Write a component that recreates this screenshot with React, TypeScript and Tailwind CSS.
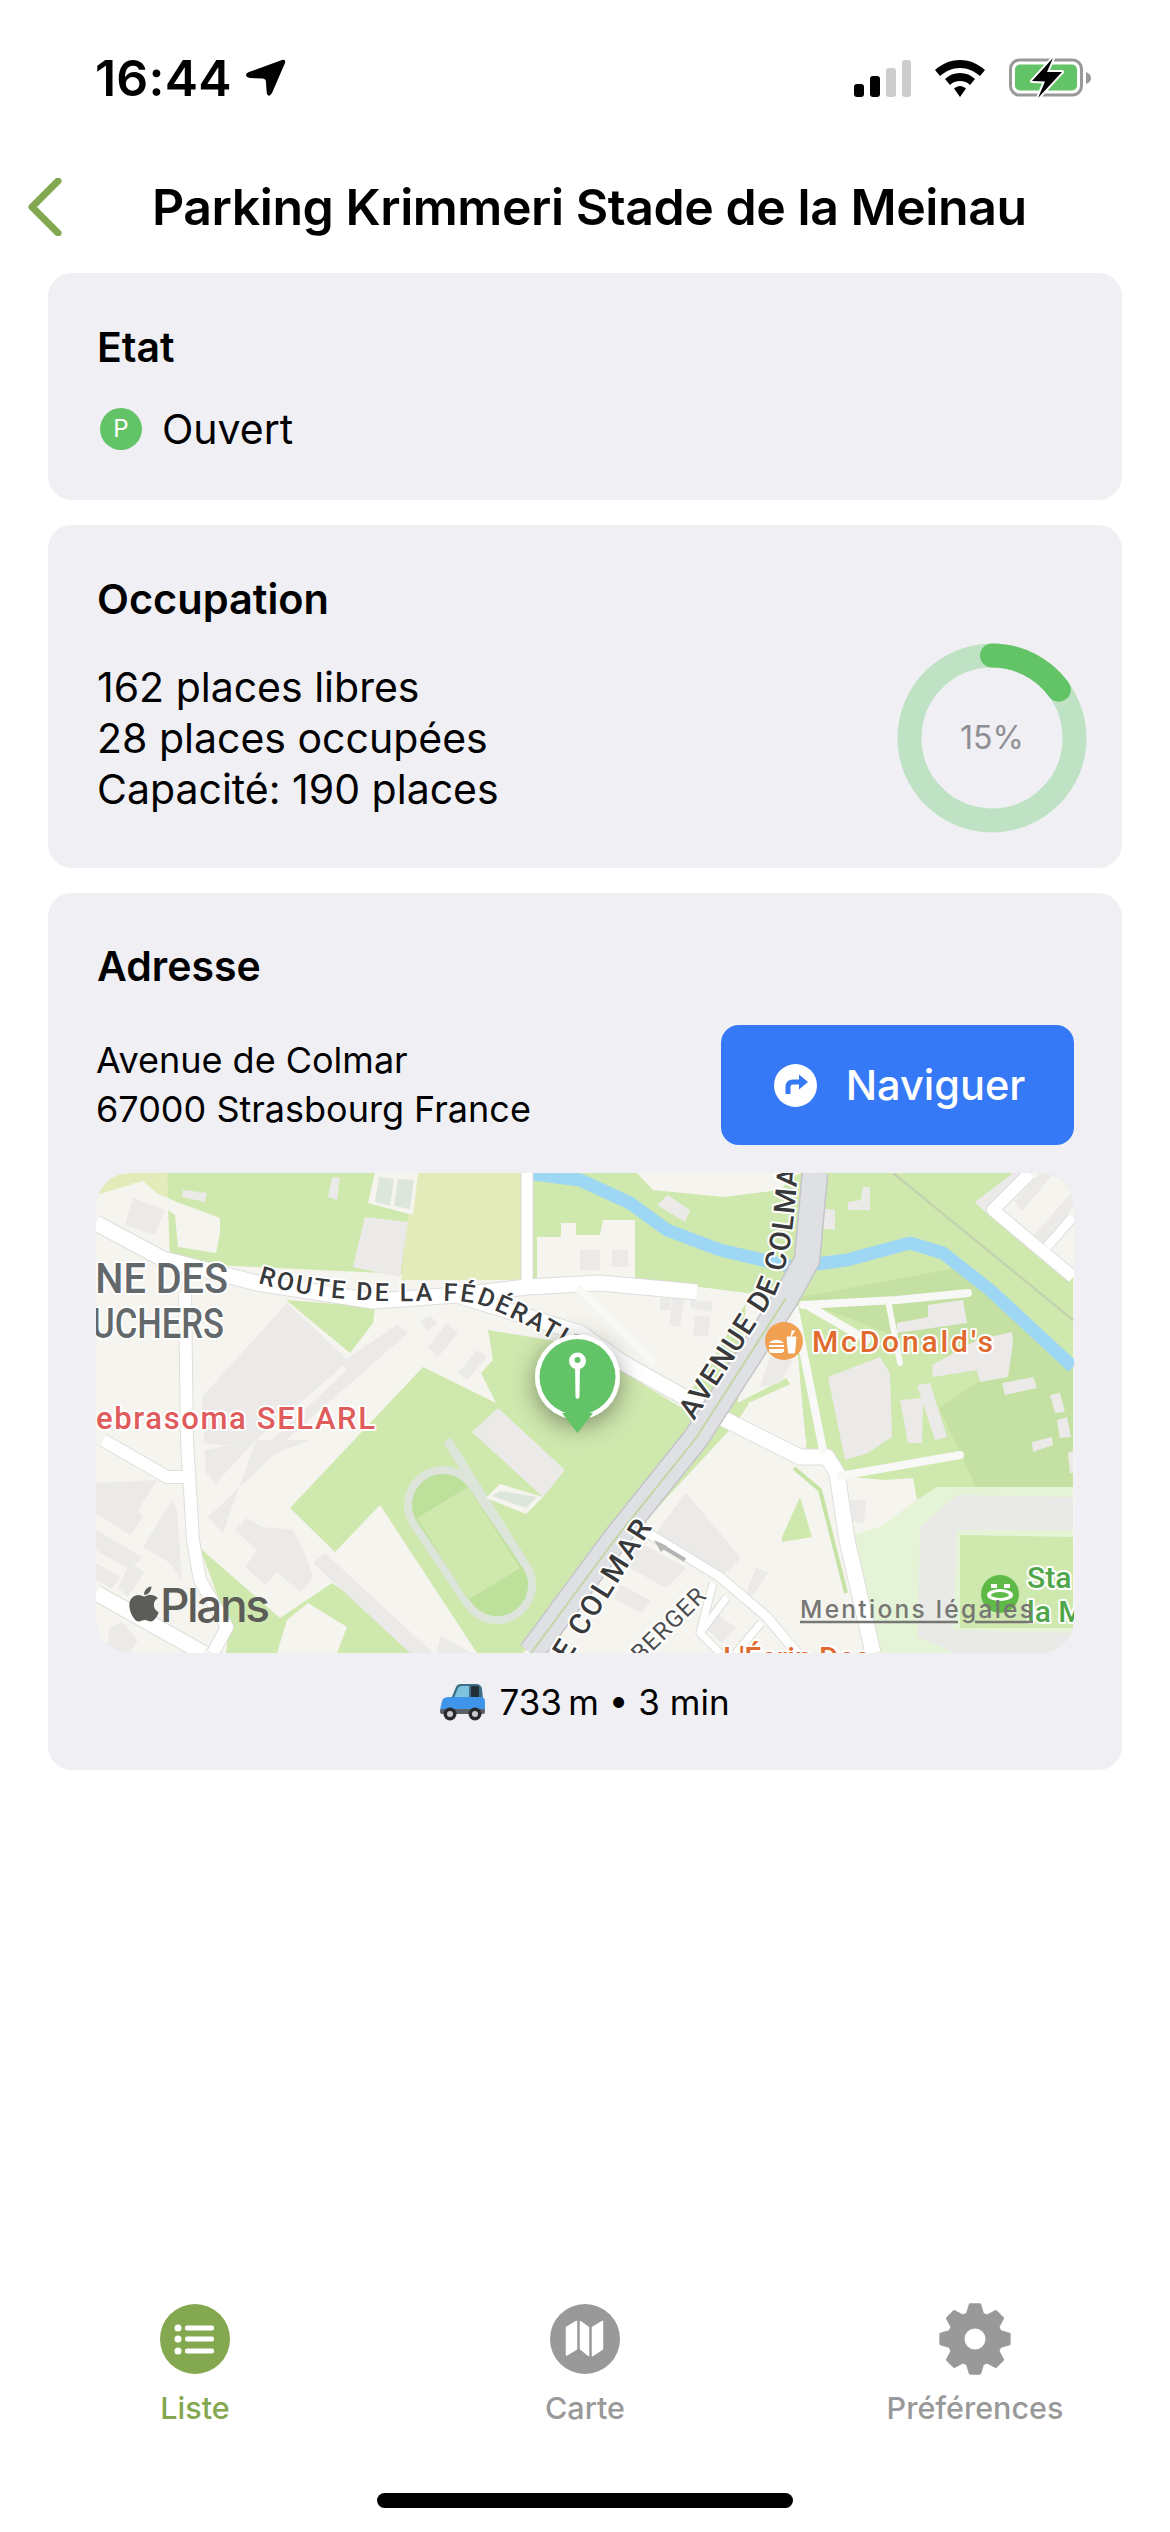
import type { ReactNode } from "react";
import { FaApple } from "react-icons/fa";

const LAND = "#f6f4ee";
const GREEN = "#cfe8ae";
const BUILDING = "#ebeae8";
const SANS = "font-['Inter',sans-serif]";

// polygons in map coordinates (978 x 480)
const greens = [
  "71,0 436,0 436,107 74,90",
  "190,127 279,134 277,150 254,180",
  "327,194 400,230 385,200 397,187 392,157 484,172 584,234 620,180 650,130 640,250 427,480 381,480 284,332 239,379 194,335",
  "104,375 184,445 236,410 337,480 130,480 133,454",
  "436,0 715,0 690,125 604,114 436,107",
  "719,0 977,0 977,314 841,314 821,327 817,305 789,307 744,303 735,284 711,284 697,127 711,100",
  "622,240 690,205 697,215 652,232 640,250",
  "704,324 716,364 686,369 686,364",
];

const lands = [
  "541,0 557,17 627,24 684,17 701,0",
  "441,64 465,64 465,50 480,50 480,62 504,62 507,47 539,47 539,110 441,110",
  "34,9 81,29 124,45 124,60 120,80 82,74 79,42 48,20",
  "279,0 322,0 317,42 272,30",
  "652,230 697,210 711,270 657,260",
  "500,125 617,127 630,150 591,194 561,180",
  "191,447 212,430 251,454 241,480 181,480",
  "917,0 977,0 977,104 897,37",
];

const buildings = [
  "37,25 69,37 59,62 29,52",
  "87,17 111,20 109,29 86,24",
  "236,4 244,5 241,27 232,24",
  "269,44 312,49 304,104 257,94",
  "106,224 191,130 252,187 240,199 152,274 108,270",
  "301,152 312,160 184,272 176,267 251,197 244,190",
  "324,148 334,143 342,150 332,157",
  "351,150 362,160 342,184 332,174",
  "381,177 391,184 371,207 362,200",
  "112,344 180,280 214,267 160,267 127,360",
  "109,277 160,267 120,310 110,300",
  "139,357 151,345 166,354 197,357 209,380 217,405 204,419 181,399 169,412 149,394 161,377",
  "217,390 229,380 337,480 314,480",
  "0,310 61,307 42,337 47,344 34,362 0,340",
  "47,374 76,327 81,337 86,407 74,390",
  "0,357 46,384 34,397 0,377",
  "0,390 24,404 16,416 0,406",
  "34,390 49,399 31,424 22,414",
  "14,454 26,449 42,467 34,480 10,480",
  "376,259 402,235 469,297 447,324",
  "345,463 376,480 340,480",
  "561,32 572,22 594,37 589,49",
  "752,37 774,37 774,14 767,14 765,27 752,29",
  "722,35 739,37 739,57 722,55",
  "484,77 504,77 504,97 484,97",
  "516,77 532,77 532,94 516,94",
  "564,125 575,125 574,137 564,138",
  "576,125 589,124 584,154 574,152",
  "594,127 617,129 615,139 594,135",
  "599,142 614,144 612,164 597,162",
  "664,214 674,184 697,187 684,210",
  "732,204 784,184 794,200 796,264 772,280 749,287",
  "804,227 827,225 826,270 812,270",
  "821,212 834,210 851,264 839,267",
  "832,132 867,127 871,150 801,160 801,150 832,144",
  "881,167 916,159 917,170 912,204 884,209 881,197 837,204 836,192",
  "906,210 937,204 941,215 909,222",
  "954,222 964,220 969,239 959,240",
  "961,247 971,244 975,264 964,265",
  "936,269 956,264 957,272 937,279",
  "972,280 977,278 977,300 974,300",
  "879,29 917,0 930,0 890,40",
  "918,28 944,0 958,0 926,38",
  "938,62 977,18 977,34 950,72",
  "545,370 590,395 570,415 525,390",
  "525,412 555,428 545,440 518,425",
  "620,440 640,455 625,470 610,455",
  "660,395 672,400 655,425 650,420",
  "590,320 645,385 625,405 560,360",
  "750,328 770,326 768,350 755,348",
];

const whiteRoads = [
  { d: "M0 50 L67 86 L161 110 L277 128 L361 122 L431 114 L504 110 L601 119", w: 15 },
  { d: "M361 122 L484 160 L527 190 L624 244 L704 284 L731 284 L741 300 L751 367 L777 480", w: 15 },
  { d: "M431 0 L431 114", w: 11 },
  { d: "M89 120 L91 267 L97 367 L104 407 L131 454 L117 480", w: 12 },
  { d: "M7 267 L71 304 L91 304", w: 12 },
  { d: "M0 420 L107 480", w: 15 },
  { d: "M934 0 L897 37 L977 104", w: 12 },
  { d: "M977 44 L951 74", w: 9 },
  { d: "M547 357 L624 404 L671 444 L701 480", w: 9 },
  { d: "M617 410 L604 460 L624 480", w: 7 },
  { d: "M631 424 L604 460", w: 7 },
  { d: "M665 450 L640 480", w: 7 },
];

const pathRoads = [
  { d: "M484 117 L556 187", w: 8 },
  { d: "M697 127 L727 277", w: 8 },
  { d: "M707 132 L801 127 L872 120", w: 8 },
  { d: "M714 134 L771 167", w: 8 },
  { d: "M792 127 L804 190", w: 6 },
  { d: "M744 303 L864 282", w: 8 },
];

function ParkingMap() {
  const labelFont = "Roboto, Inter, sans-serif";
  return (
    <div className="h-[480px] w-[978px] overflow-hidden rounded-[34px]">
      <svg viewBox="0 0 978 480" className="block h-full w-full">
        <defs>
          <filter id="pin-shadow" x="-60%" y="-60%" width="220%" height="220%">
            <feDropShadow dx="0" dy="6" stdDeviation="12" floodColor="#000" floodOpacity="0.4" />
          </filter>
          <path id="route-label" d="M162 110 C 200 122, 245 127, 290 128 C 335 129, 360 125, 385 132 C 420 145, 455 165, 495 190" />
          <path id="avenue-label" d="M598 248 L 678 124 C 692 95, 698 60, 703 -20" />
          <path id="colmar-label" d="M420 572 L 558 352" />
          <path id="berger-label" d="M530 505 L 612 424" />
        </defs>

        <rect width="978" height="480" fill={LAND} />
        <polygon points="0,0 71,0 72,30 47,8 0,22" fill="#e4ebbb" />
        {greens.map((p) => (
          <polygon key={p} points={p} fill={GREEN} />
        ))}
        <polygon points="317,0 424,0 424,107 305,107" fill="#e4ebbb" />
        <polygon points="700,125 860,95 910,130 977,195 977,314 880,314 843,235 895,200" fill="#c5e0a3" />
        {lands.map((p) => (
          <polygon key={p} points={p} fill={LAND} />
        ))}

        {/* stade en bas a droite */}
        <polygon points="756,362 784,354 821,327 841,314 977,314 977,480 777,480" fill="#e5f3d6" />
        <polygon points="824,354 861,322 977,324 977,480 860,480 822,464" fill="#e9e9e7" />
        <polygon points="861,357 977,357 977,460 857,457" fill="#e5f3d6" />
        <polygon points="864,362 977,364 977,455 864,455" fill={GREEN} />

        {/* piste */}
        <path d="M351 267 L426 387" stroke="#dde5da" strokeWidth="9" fill="none" />
        <path d="M347 332 L401 412" stroke="#dde5da" strokeWidth="78" strokeLinecap="round" fill="none" />
        <path d="M347 332 L401 412" stroke="#bde09a" strokeWidth="62" strokeLinecap="round" fill="none" />
        <polygon points="321,345 372,314 424,395 372,427" fill={GREEN} />
        <polygon points="404,311 447,324 430,341 390,325" fill={LAND} />
        <polygon points="404,318 441,324 430,335 396,323" fill="#dde6dc" />
        <polygon points="283,4 298,6 294,33 279,29" fill="#dde6dc" />
        <polygon points="302,6 318,7 314,36 298,33" fill="#dde6dc" />

        {buildings.map((p) => (
          <polygon key={p} points={p} fill={BUILDING} />
        ))}

        {/* cours d'eau */}
        <path
          d="M437 1 L484 7 L534 30 L571 57 L624 77 L697 94 L751 87 L814 70 L847 80 L894 117 L977 194"
          stroke="#9dd7f3"
          strokeWidth="13"
          fill="none"
          strokeLinejoin="round"
        />

        {/* voie ferree */}
        <path d="M797 0 L977 147" stroke="#c3d3ae" strokeWidth="2.5" fill="none" />

        {whiteRoads.map((r) => (
          <path key={r.d} d={r.d} stroke="#dededc" strokeWidth={r.w + 2} fill="none" strokeLinejoin="round" />
        ))}
        {whiteRoads.map((r) => (
          <path key={r.d} d={r.d} stroke="#ffffff" strokeWidth={r.w} fill="none" strokeLinejoin="round" />
        ))}
        {pathRoads.map((r) => (
          <path key={r.d} d={r.d} stroke="#f8f8f6" strokeWidth={r.w} fill="none" strokeLinecap="round" strokeLinejoin="round" />
        ))}
        <path d="M564 372 L589 387" stroke="#b5b5b5" strokeWidth="4" />
        <path d="M571 373 L558 367 L565 379 Z" fill="#b5b5b5" />
        <path d="M698 295 L724 317 L750 420" stroke="#c6e3a6" strokeWidth="4" fill="none" />

        {/* avenue de Colmar */}
        <path d="M719 0 L711 87 L690 125 L600 265 L520 365 L435 480" stroke="#c4c5c8" strokeWidth="27" fill="none" strokeLinejoin="round" />
        <path d="M719 0 L711 87 L690 125 L600 265 L520 365 L435 480" stroke="#dfe0e4" strokeWidth="24" fill="none" strokeLinejoin="round" />
        <path d="M690 125 L600 265 L520 365 L435 480" stroke="#c2d6a4" strokeWidth="2" fill="none" />

        {/* libelles */}
        <g fontFamily={labelFont} paintOrder="stroke" stroke="#ffffff" strokeWidth="4" strokeLinejoin="round">
          <text x="-12" y="120" fontSize="42" fontWeight="500" fill="#63686b" textLength="144" lengthAdjust="spacingAndGlyphs">
            INE DES
          </text>
          <text x="-4" y="165" fontSize="42" fontWeight="500" fill="#63686b" textLength="132" lengthAdjust="spacingAndGlyphs">
            UCHERS
          </text>
          <text fontSize="25" fontWeight="500" fill="#38393b" letterSpacing="2.4">
            <textPath href="#route-label">ROUTE DE LA FÉDÉRATION</textPath>
          </text>
          <text fontSize="29" fontWeight="500" fill="#38393b" letterSpacing="1.5">
            <textPath href="#avenue-label">AVENUE DE COLMAR</textPath>
          </text>
          <text fontSize="29" fontWeight="500" fill="#38393b" letterSpacing="2.5" textAnchor="end">
            <textPath href="#colmar-label" startOffset="100%">
              AVENUE DE COLMAR
            </textPath>
          </text>
          <text fontSize="24" fill="#4d4e50" letterSpacing="1" textAnchor="end">
            <textPath href="#berger-label" startOffset="100%">
              BERGER
            </textPath>
          </text>
          <text x="0" y="256" fontSize="31" fontWeight="500" fill="#e05b5b" textLength="279">
            ebrasoma SELARL
          </text>
          <text x="716" y="179" fontSize="30" fontWeight="500" fill="#e0692e" textLength="181">
            McDonald's
          </text>
          <text x="627" y="495" fontSize="30" fontWeight="500" fill="#e0692e">
            L'Écrin Des
          </text>
          <text x="931" y="415" fontSize="30" fontWeight="500" fill="#4fa64a">
            Sta
          </text>
          <text x="931" y="449" fontSize="30" fontWeight="500" fill="#4fa64a">
            la M
          </text>
        </g>

        {/* McDonald's */}
        <circle cx="688" cy="168" r="19" fill="#f0a050" />
        <path d="M673 170 a9 7 0 0 1 15 0 Z M673 172 h15 v2 h-15 Z M673 176 h15 a3 3 0 0 1 -3 4 h-9 a3 3 0 0 1 -3 -4 Z" fill="#fff" />
        <path d="M691 164 h9 l-1.5 16 h-6 Z M695 164 l1 -6 h3" fill="#fff" stroke="#fff" strokeWidth="1" />

        {/* stade */}
        <circle cx="904" cy="421" r="19" fill="#5fb946" />
        <ellipse cx="904" cy="422" rx="13" ry="6" fill="#fff" />
        <ellipse cx="904" cy="422" rx="9" ry="3" fill="#5fb946" />
        <rect x="895" y="411" width="6" height="4" fill="#fff" />
        <rect x="908" y="411" width="6" height="4" fill="#fff" />

        {/* mentions et logo */}
        <text x="704" y="445" fontFamily="Inter, sans-serif" fontSize="24.5" fontWeight="500" fill="#767674" textLength="233">
          Mentions légales
        </text>
        <path d="M704 449 H862 M879 449 H937" stroke="#767674" strokeWidth="2.5" />
        <FaApple x="28" y="411" size="40" color="#5c5c58" />
        <text x="64" y="449" fontFamily="Inter, sans-serif" fontSize="46" fontWeight="500" fill="#5c5c58" textLength="110">
          Plans
        </text>

        {/* repere du parking */}
        <g filter="url(#pin-shadow)">
          <circle cx="481.5" cy="204" r="42.5" fill="#fff" />
        </g>
        <path d="M466 240 L481.5 260 L497 240 Z" fill="#62c466" />
        <circle cx="481.5" cy="204" r="38" fill="#62c466" />
        <path d="M479 190 L484 190 L483.5 224 Q481.5 228 479.5 224 Z" fill="#fff" />
        <circle cx="481.5" cy="188" r="8.5" fill="#fff" />
        <circle cx="481.5" cy="187" r="3" fill="#62c466" />
      </svg>
    </div>
  );
}

function CarEmoji() {
  return (
    <svg viewBox="0 0 45 38" className="h-[38px] w-[45px] shrink-0">
      <path d="M11 16 L16 4 Q17 1 21 1 L36 1 Q41 1 42 6 L43 16 Z" fill="#3c6f86" />
      <path d="M14 15 L18 5 Q19 3 22 3 L29 3 L29 15 Z" fill="#7fc4de" />
      <rect x="31" y="3" width="8" height="12" rx="1" fill="#232f36" />
      <path d="M2 18 Q3 14 9 14 L41 14 Q45 14 45 19 L45 27 L0 27 Z" fill="#3f95ea" />
      <rect x="0" y="26" width="45" height="5" rx="2" fill="#5b6168" />
      <circle cx="10" cy="31" r="6.5" fill="#2a2a2c" />
      <circle cx="10" cy="31" r="3" fill="#c9cbce" />
      <circle cx="35" cy="31" r="6.5" fill="#2a2a2c" />
      <circle cx="35" cy="31" r="3" fill="#c9cbce" />
    </svg>
  );
}

function StatusBar() {
  return (
    <div className="flex h-[140px] items-start justify-between pl-[95px] pr-[79px] pt-[50px]">
      <div className="flex items-center gap-[14px]">
        <span className="text-[50px] leading-[56px] font-semibold tracking-[0.2px] text-black">16:44</span>
        <svg viewBox="0 0 40 38" className="h-[38px] w-[40px]">
          <path d="M36 1 Q40 0 39 4 L26 34 Q23 39 21 35 Q20.5 33 20 23 Q20 20 17 19.5 L4 19 Q0 18 0 16 Q0 14 3 13 Z" fill="#000" />
        </svg>
      </div>
      <div className="flex h-[56px] items-center gap-[24px]">
        <div className="flex h-[37px] items-end gap-[6px]">
          <div className="h-[13px] w-[10px] rounded-[3px] bg-black" />
          <div className="h-[21px] w-[10px] rounded-[3px] bg-black" />
          <div className="h-[29px] w-[10px] rounded-[3px] bg-[#cccccc]" />
          <div className="h-[37px] w-[9px] rounded-[3px] bg-[#cccccc]" />
        </div>
        <svg viewBox="0 0 50 37" className="h-[37px] w-[50px]">
          <path d="M25 0 C35 0 43 4 50 10 L45 16 C39 11 33 8 25 8 C17 8 11 11 5 16 L0 10 C7 4 15 0 25 0 Z" fill="#000" />
          <path d="M25 13 C31 13 36 15 40 19 L35 25 C32 22 29 21 25 21 C21 21 18 22 15 25 L10 19 C14 15 19 13 25 13 Z" fill="#000" />
          <path d="M25 26 C27 26 29 27 31 28.5 L25 37 L19 28.5 C21 27 23 26 25 26 Z" fill="#000" />
        </svg>
        <svg viewBox="0 0 82 42" className="h-[42px] w-[82px]">
          <rect x="1.5" y="3" width="71" height="35" rx="9" fill="#fff" stroke="#999999" strokeWidth="3" />
          <rect x="6" y="7.5" width="62" height="26" rx="5" fill="#62c466" />
          <path d="M77 15 Q82 17 82 21 Q82 25 77 27 Z" fill="#999999" />
          <path d="M44 1 L23 24 L36 24.5 L29 41 L53 15 L38 15 Z" fill="#000" stroke="#fff" strokeWidth="4" strokeLinejoin="round" paintOrder="stroke" />
        </svg>
      </div>
    </div>
  );
}

function Donut({ percent }: { percent: number }) {
  const r = 82.5;
  const circumference = 2 * Math.PI * r;
  return (
    <div className="relative h-[190px] w-[190px] shrink-0">
      <svg viewBox="0 0 190 190" className="h-full w-full -rotate-90">
        <circle cx="95" cy="95" r={r} fill="none" stroke="#c0e2c4" strokeWidth="24" />
        <circle
          cx="95"
          cy="95"
          r={r}
          fill="none"
          stroke="#62c466"
          strokeWidth="24"
          strokeLinecap="round"
          strokeDasharray={`${(circumference * percent) / 100} ${circumference}`}
        />
      </svg>
      <div className="absolute inset-0 flex items-center justify-center text-[32px] text-[#8e8e93]">{percent}%</div>
    </div>
  );
}

// 8 teeth, top tooth pointing up
function gearPath(cx: number, cy: number) {
  const pt = (r: number, deg: number) => {
    const a = ((deg - 90) * Math.PI) / 180;
    return `${(cx + r * Math.cos(a)).toFixed(2)} ${(cy + r * Math.sin(a)).toFixed(2)}`;
  };
  const parts: string[] = [];
  for (let i = 0; i < 8; i++) {
    const c = i * 45;
    parts.push(`${i === 0 ? "M" : "L"}${pt(26, c - 17)}`, `L${pt(34.5, c - 8)}`, `L${pt(34.5, c + 8)}`, `L${pt(26, c + 17)}`);
  }
  return `${parts.join(" ")} Z M${cx + 12} ${cy} a12 12 0 1 0 -24 0 a12 12 0 1 0 24 0 Z`;
}

function TabItem({ label, color, children }: { label: string; color: string; children: ReactNode }) {
  return (
    <div className="flex flex-col items-center">
      <div className="flex h-[72px] items-center justify-center">{children}</div>
      <span className="mt-[15px] text-[30.5px] leading-[36px] font-medium" style={{ color }}>
        {label}
      </span>
    </div>
  );
}

export default function App() {
  return (
    <div className={`flex h-[2532px] w-[1170px] flex-col bg-white text-black ${SANS}`}>
      <StatusBar />

      {/* Header */}
      <div className="flex h-[133px] items-center pl-[28px]">
        <svg viewBox="0 0 34 58" className="h-[58px] w-[34px]">
          <path d="M30 3 L4 29 L30 55" fill="none" stroke="#84a850" strokeWidth="7" strokeLinecap="round" strokeLinejoin="round" />
        </svg>
        <h1 className="ml-[90px] text-[50px] leading-[60px] font-semibold tracking-[-0.45px]">Parking Krimmeri Stade de la Meinau</h1>
      </div>

      <main className="flex flex-1 flex-col gap-[25px] px-[48px]">
        {/* Etat */}
        <section className="h-[227px] rounded-[24px] bg-[#efeff4] pl-[49px] pt-[50px]">
          <h2 className="text-[41px] leading-[48px] font-semibold">Etat</h2>
          <div className="mt-[32px] flex items-center gap-[20px] pl-[3px]">
            <div className="flex h-[42px] w-[42px] items-center justify-center rounded-full bg-[#62c466] text-[24px] text-white">P</div>
            <span className="text-[41px] leading-[52px]">Ouvert</span>
          </div>
        </section>

        {/* Occupation */}
        <section className="flex h-[343px] flex-col rounded-[24px] bg-[#efeff4] pl-[49px] pr-[35px] pt-[50px]">
          <h2 className="text-[41.5px] leading-[48px] font-semibold">Occupation</h2>
          <div className="mt-[20px] flex items-center justify-between">
            <div className="text-[41px] leading-[51px]">
              <div>162 places libres</div>
              <div>28 places occupées</div>
              <div>Capacité: 190 places</div>
            </div>
            <Donut percent={15} />
          </div>
        </section>

        {/* Adresse */}
        <section className="flex h-[877px] flex-col rounded-[24px] bg-[#efeff4] px-[48px] pt-[49px]">
          <h2 className="pl-[1px] text-[41px] leading-[48px] font-semibold">Adresse</h2>
          <div className="mt-[35px] flex items-center justify-between">
            <div className="text-[36px] leading-[49px]">
              <div>Avenue de Colmar</div>
              <div>67000 Strasbourg France</div>
            </div>
            <button className="flex h-[120px] w-[353px] items-center justify-center gap-[29px] rounded-[18px] bg-[#3679f6] pl-[4px] text-[41.5px] font-medium text-white">
              <svg viewBox="0 0 43 43" className="h-[43px] w-[43px]">
                <circle cx="21.5" cy="21.5" r="21.5" fill="#fff" />
                <path d="M14 30 L14 23 Q14 18 19 18 L27 18" fill="none" stroke="#3679f6" strokeWidth="5" />
                <path d="M25 10.5 L34 18 L25 25.5 Z" fill="#3679f6" />
              </svg>
              Naviguer
            </button>
          </div>
          <div className="mt-[28px]">
            <ParkingMap />
          </div>
          <div className="mt-[27px] flex items-center justify-center gap-[14px] text-[35px] leading-[44px]">
            <CarEmoji />
            <span>733&#8201;m • 3 min</span>
          </div>
        </section>
      </main>

      {/* Tab bar */}
      <nav className="grid grid-cols-3">
        <TabItem label="Liste" color="#84a850">
          <svg viewBox="0 0 70 70" className="h-[70px] w-[70px]">
            <circle cx="35" cy="35" r="35" fill="#84a850" />
            <g fill="#fff">
              <circle cx="18" cy="24" r="3.5" />
              <circle cx="18" cy="35" r="3.5" />
              <circle cx="18" cy="47" r="3.5" />
              <rect x="25" y="21.5" width="29" height="5" rx="2" />
              <rect x="25" y="32.5" width="29" height="5" rx="2" />
              <rect x="25" y="44.5" width="29" height="5" rx="2" />
            </g>
          </svg>
        </TabItem>
        <TabItem label="Carte" color="#999999">
          <svg viewBox="0 0 70 70" className="h-[70px] w-[70px]">
            <circle cx="35" cy="35" r="35" fill="#999999" />
            <g fill="#fff" stroke="#fff" strokeWidth="1.5" strokeLinejoin="round">
              <path d="M16.5 23.5 L26.5 17.5 L26.5 45 L16.5 51 Z" />
              <path d="M30.5 17.5 L38.5 23.5 L38.5 51.5 L30.5 45 Z" />
              <path d="M42.5 23.5 L52.5 17.5 L52.5 45 L42.5 51.5 Z" />
            </g>
          </svg>
        </TabItem>
        <TabItem label="Préférences" color="#999999">
          <svg viewBox="0 0 72 72" className="h-[72px] w-[72px]">
            <path d={gearPath(36, 36)} fill="#999999" fillRule="evenodd" stroke="#999999" strokeWidth="3" strokeLinejoin="round" />
          </svg>
        </TabItem>
      </nav>

      {/* Home indicator */}
      <div className="flex justify-center pb-[24px] pt-[67px]">
        <div className="h-[15px] w-[416px] rounded-full bg-black" />
      </div>
    </div>
  );
}
